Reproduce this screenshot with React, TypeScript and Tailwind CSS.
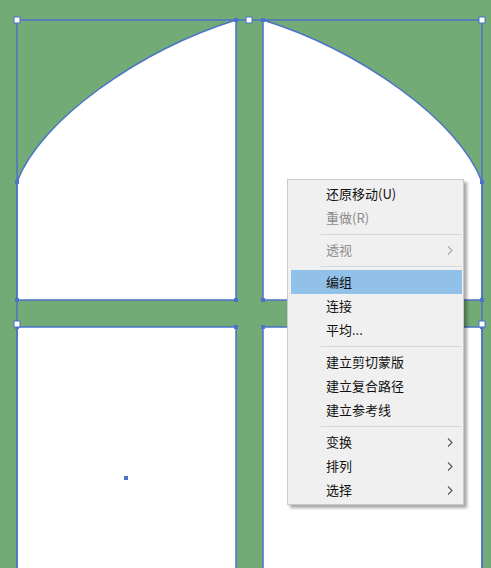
import React from 'react';

// 菜单项：sep 表示分隔线
interface MenuItem {
  label?: string;
  disabled?: boolean;
  submenu?: boolean;
  active?: boolean;
  sep?: boolean;
}

const items: MenuItem[] = [
  { label: '还原移动(U)' },
  { label: '重做(R)', disabled: true },
  { sep: true },
  { label: '透视', disabled: true, submenu: true },
  { sep: true },
  { label: '编组', active: true },
  { label: '连接' },
  { label: '平均...' },
  { sep: true },
  { label: '建立剪切蒙版' },
  { label: '建立复合路径' },
  { label: '建立参考线' },
  { sep: true },
  { label: '变换', submenu: true },
  { label: '排列', submenu: true },
  { label: '选择', submenu: true },
];

const BLUE = '#4d72c9';

// filled anchor points
const anchors: [number, number][] = [
  [236, 20], [263, 20],
  [17, 182], [482, 182],
  [17, 300], [236, 300], [263, 300], [482, 300],
  [17, 327], [236, 327], [263, 327], [482, 327],
  [126, 478],
];

// hollow bounding-box handles
const handles: [number, number][] = [
  [17, 20], [249, 20], [482, 20], [17, 324], [482, 324],
];

const Artwork: React.FC = () => (
  <svg className="absolute inset-0" width={491} height={568} viewBox="0 0 491 568">
    {/* top panes */}
    <path d="M17,182 C40,120 140,50 236,20 L236,300 L17,300 Z" fill="#fff" stroke={BLUE} strokeWidth={1.5} />
    <path d="M263,20 C359,50 459,120 482,182 L482,300 L263,300 Z" fill="#fff" stroke={BLUE} strokeWidth={1.5} />
    {/* bottom panes */}
    <rect x={17} y={327} width={219} height={300} fill="#fff" stroke={BLUE} strokeWidth={1.5} />
    <rect x={263} y={327} width={219} height={300} fill="#fff" stroke={BLUE} strokeWidth={1.5} />
    {/* bounding box */}
    <path d="M17,600 L17,20 L482,20 L482,600" fill="none" stroke={BLUE} strokeWidth={1.5} />
    {anchors.map(([x, y], i) => (
      <rect key={i} x={x - 2} y={y - 2} width={4} height={4} fill={BLUE} />
    ))}
    {handles.map(([x, y], i) => (
      <rect key={i} x={x - 3} y={y - 3} width={6} height={6} fill="#fff" stroke={BLUE} strokeWidth={1} />
    ))}
  </svg>
);

const Chevron: React.FC<{ color: string }> = ({ color }) => (
  <svg width={6} height={9} viewBox="0 0 6 9" className="absolute left-[159px] top-[8px]">
    <polyline points="1,0.5 5,4.5 1,8.5" fill="none" stroke={color} strokeWidth={1.1} />
  </svg>
);

export default function App() {
  return (
    <div className="relative w-[491px] h-[568px] bg-[#72ab76] overflow-hidden font-['Noto_Sans_CJK_SC','Microsoft_YaHei',sans-serif]">
      <Artwork />

      <div className="absolute left-[287px] top-[179px] w-[177px] bg-[#f0f0f0] border border-[#cacaca] pt-[2px] pb-[2px] shadow-[3px_3px_3px_rgba(0,0,0,0.35)]">
        {items.map((item, i) =>
          item.sep ? (
            <div key={i} className="h-2 flex items-center pl-[33px] pr-[1px]">
              <div className="h-px w-full bg-[#d7d7d7]" />
            </div>
          ) : (
            <div
              key={i}
              className={
                item.active
                  ? 'relative h-6 flex items-center ml-[3px] mr-[1px] pl-[35px] bg-[#91c1e8]'
                  : 'relative h-6 flex items-center pl-[38px]'
              }
            >
              <span className={item.disabled ? 'text-[13px] text-[#8c8c8c]' : 'text-[13px] text-[#111]'}>
                {item.label}
              </span>
              {item.submenu && <Chevron color={item.disabled ? '#a8a8a8' : '#555'} />}
            </div>
          )
        )}
      </div>
    </div>
  );
}
